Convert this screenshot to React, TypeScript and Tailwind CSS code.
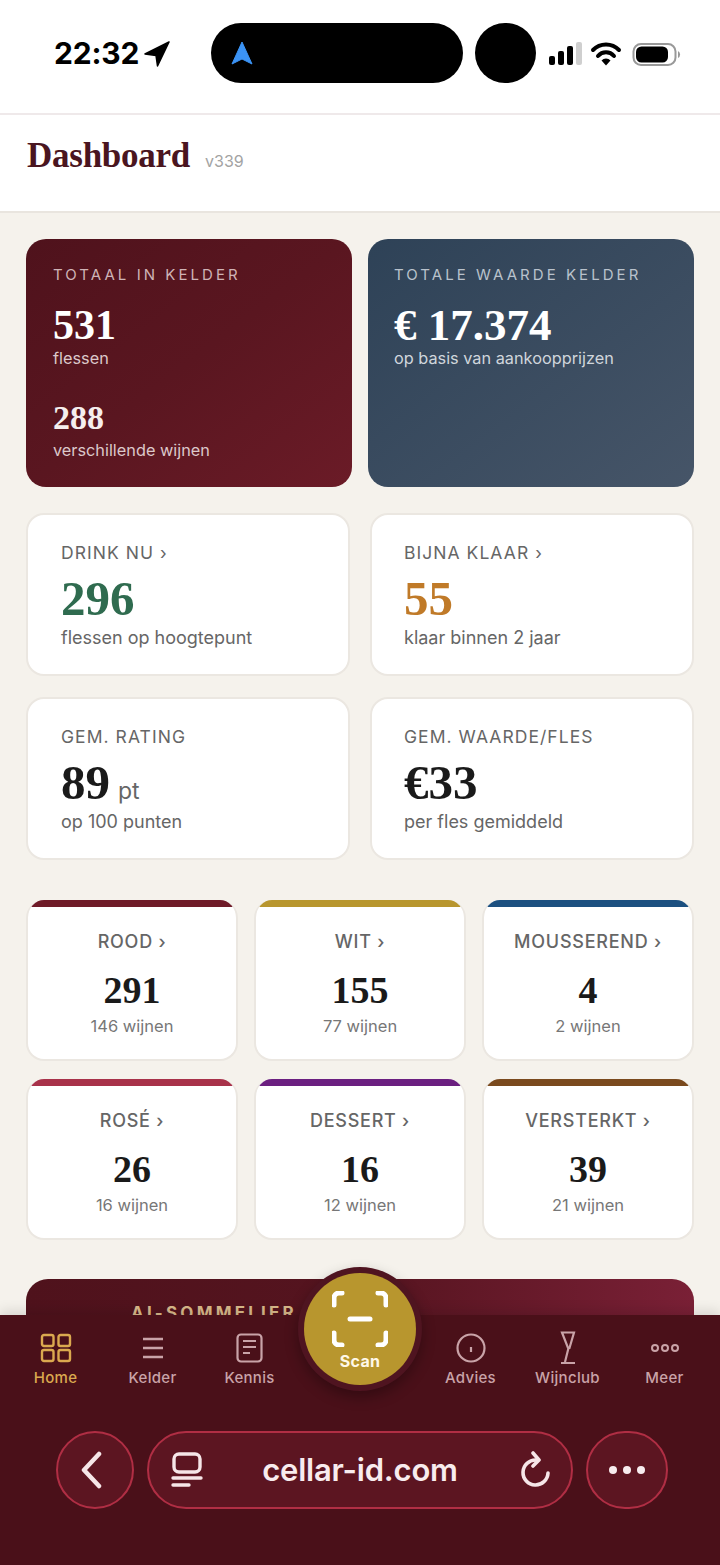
const serif = "font-['Liberation_Serif','Times_New_Roman',serif]";

function StatCard({ label, value, sub, valueClass = "text-[#1a1a1a]", unit, right }: { label: string; value: string; sub: string; valueClass?: string; unit?: string; right?: boolean }) {
  return (
    <div className={`h-[163px] rounded-[18px] border-2 border-[#ebe7e1] bg-white pt-[27px] ${right ? "pl-[32px]" : "pl-[33px]"}`}>
      <div className="text-[17.5px] leading-[22px] tracking-[1.05px] text-[#666]">{label}</div>
      <div className="mt-[10px] flex h-[50px] items-baseline">
        <span className={`${serif} text-[49px] leading-[50px] font-bold ${valueClass}`}>{value}</span>
        {unit && <span className="ml-[8px] text-[23px] text-[#666]">{unit}</span>}
      </div>
      <div className="mt-[3px] text-[18px] leading-[22px] text-[#666]">{sub}</div>
    </div>
  );
}

function TypeCard({ label, value, sub, top }: { label: string; value: string; sub: string; top: string }) {
  return (
    <div className="h-[161px] overflow-hidden rounded-[18px] border-2 border-t-0 border-[#ebe7e1] bg-white text-center">
      <div className={`h-[7px] ${top}`} />
      <div className="mt-[24px] text-[18px] leading-[22px] font-medium tracking-[0.75px] text-[#666]">{label}</div>
      <div className={`${serif} mt-[15px] text-[38px] leading-[44px] font-bold text-[#1a1a1a]`}>{value}</div>
      <div className="mt-[3px] text-[16.5px] leading-[22px] text-[#777]">{sub}</div>
    </div>
  );
}

function NavItem({ label, active, children }: { label: string; active?: boolean; children: React.ReactNode }) {
  return (
    <div className={`flex w-[97px] shrink-0 flex-col items-center ${active ? "text-[#dba94f]" : "text-[#c9a3a8]"}`}>
      <div className="flex h-[36px] w-[36px] items-center justify-center">{children}</div>
      <div className="mt-[2px] text-[15px] leading-[20px] font-medium tracking-[0.3px]">{label}</div>
    </div>
  );
}

export default function App() {
  return (
    <div className="relative h-[1565px] w-[720px] overflow-hidden bg-[#f5f2ec] font-['Inter',sans-serif]">
      {/* status bar */}
      <div className="flex h-[115px] items-start border-b-2 border-[#efe9ea] bg-white">
        <div className="ml-[54px] mt-[37px] text-[30px] leading-[32px] font-bold tracking-[-0.2px] text-black">22:32</div>
        <svg width="26" height="26" viewBox="0 0 26 26" className="ml-[5px] mt-[41px]">
          <path d="M25 1 L1 13 L12 14.5 L13.5 25 Z" fill="#000" stroke="#000" strokeWidth="1.5" strokeLinejoin="round" />
        </svg>
        <div className="ml-[41px] mt-[23px] flex h-[60px] w-[252px] items-center rounded-[30px] bg-black pl-[20px]">
          <svg width="22" height="24" viewBox="0 0 22 24"><path d="M11 1 L21 23 L11 18 L1 23 Z" fill="#3b93f5" stroke="#3b93f5" strokeLinejoin="round" /></svg>
        </div>
        <div className="ml-[12px] mt-[23px] h-[60px] w-[61px] rounded-full bg-black" />
        <svg width="136" height="30" viewBox="0 0 136 30" className="ml-[12px] mt-[38px]">
          <rect x="1" y="18" width="6" height="9" rx="2" fill="#000" />
          <rect x="10" y="13" width="6" height="14" rx="2" fill="#000" />
          <rect x="19" y="8" width="6" height="19" rx="2" fill="#000" />
          <rect x="28" y="4" width="6" height="23" rx="2" fill="#cfcfcf" />
          <path d="M45 12 a18 18 0 0 1 26 0" fill="none" stroke="#000" strokeWidth="4" strokeLinecap="round" />
          <path d="M50 18 a10.5 10.5 0 0 1 16 0" fill="none" stroke="#000" strokeWidth="4" strokeLinecap="round" />
          <path d="M53.5 22.5 L58 27.5 L62.5 22.5 a6 6 0 0 0 -9 0 Z" fill="#000" />
          <rect x="85.5" y="6" width="42" height="21" rx="7.5" fill="none" stroke="#999" strokeWidth="2" />
          <rect x="88" y="8.5" width="32" height="16" rx="5.5" fill="#000" />
          <path d="M130 13 a4 4 0 0 1 0 7 Z" fill="#999" />
        </svg>
      </div>

      {/* header */}
      <div className="flex h-[98px] items-baseline border-b-2 border-[#e9e5df] bg-white pl-[27px] pt-[18px]">
        <span className={`${serif} text-[35px] leading-[46px] font-bold tracking-[-0.25px] text-[#4a1520]`}>Dashboard</span>
        <span className="ml-[15px] text-[16px] text-[#a3a3a3]">v339</span>
      </div>

      {/* content */}
      <div className="px-[26px] pt-[26px]">
        <div className="grid grid-cols-2 gap-[16px]">
          <div className="h-[248px] rounded-[20px] bg-gradient-to-br from-[#4f121c] via-[#5a1620] to-[#6b1b27] pl-[27px] pt-[26px]">
            <div className="text-[15px] leading-[20px] tracking-[3.05px] text-[#cfb3b6]">TOTAAL IN KELDER</div>
            <div className={`${serif} mt-[17px] text-[42px] leading-[46px] font-bold text-white`}>531</div>
            <div className="mt-[-1px] text-[16.3px] leading-[22px] text-[#dcc8ca]">flessen</div>
            <div className={`${serif} mt-[29px] text-[34px] leading-[40px] font-bold text-[#f5eeee]`}>288</div>
            <div className="mt-[1px] text-[16.3px] leading-[22px] text-[#dcc8ca]">verschillende wijnen</div>
          </div>
          <div className="h-[248px] rounded-[20px] bg-gradient-to-br from-[#2e4257] to-[#465568] pl-[26px] pt-[26px]">
            <div className="text-[15px] leading-[20px] tracking-[3.05px] text-[#b9c2cc]">TOTALE WAARDE KELDER</div>
            <div className={`${serif} mt-[17px] text-[45px] leading-[46px] font-bold text-white`}>€ 17.374</div>
            <div className="mt-[-1px] text-[16.3px] leading-[22px] text-[#d0d6dc]">op basis van aankoopprijzen</div>
          </div>
        </div>

        <div className="mt-[26px] grid grid-cols-2 gap-x-[20px] gap-y-[21px]">
          <StatCard label="DRINK NU ›" value="296" sub="flessen op hoogtepunt" valueClass="text-[#2f6b4f]" />
          <StatCard right label="BIJNA KLAAR ›" value="55" sub="klaar binnen 2 jaar" valueClass="text-[#c07a28]" />
          <StatCard label="GEM. RATING" value="89" unit="pt" sub="op 100 punten" />
          <StatCard right label="GEM. WAARDE/FLES" value="€33" sub="per fles gemiddeld" />
        </div>

        <div className="mt-[40px] grid grid-cols-3 gap-x-[16px] gap-y-[18px]">
          <TypeCard label="ROOD ›" value="291" sub="146 wijnen" top="bg-[#6f1b28]" />
          <TypeCard label="WIT ›" value="155" sub="77 wijnen" top="bg-[#b8962e]" />
          <TypeCard label="MOUSSEREND ›" value="4" sub="2 wijnen" top="bg-[#1c5080]" />
          <TypeCard label="ROSÉ ›" value="26" sub="16 wijnen" top="bg-[#a8324a]" />
          <TypeCard label="DESSERT ›" value="16" sub="12 wijnen" top="bg-[#6b1f80]" />
          <TypeCard label="VERSTERKT ›" value="39" sub="21 wijnen" top="bg-[#7a4a1e]" />
        </div>

        <div className="mt-[39px] h-[120px] rounded-t-[22px] bg-gradient-to-r from-[#4f121c] via-[#55141f] to-[#7a2036] pl-[105px] pt-[23px]">
          <div className="text-[17px] leading-[22px] font-bold tracking-[3.2px] text-[#d9b98a]">AI-SOMMELIER</div>
        </div>
      </div>

      {/* bottom nav */}
      <div className="absolute inset-x-0 bottom-0 h-[250px] bg-[#4a1019] shadow-[0_-4px_12px_rgba(0,0,0,0.12)]">
        <div className="flex pl-[7px] pt-[15px]">
          <NavItem label="Home" active>
            <svg width="32" height="30" viewBox="0 0 32 30" fill="none" stroke="currentColor" strokeWidth="2.4">
              <rect x="2" y="2" width="11.5" height="11" rx="2" /><rect x="18.5" y="2" width="11.5" height="11" rx="2" />
              <rect x="2" y="17" width="11.5" height="11" rx="2" /><rect x="18.5" y="17" width="11.5" height="11" rx="2" />
            </svg>
          </NavItem>
          <NavItem label="Kelder">
            <svg width="20" height="22" viewBox="0 0 20 22" fill="none" stroke="currentColor" strokeWidth="2.4">
              <path d="M0 2 H20 M0 11 H20 M0 20 H20" />
            </svg>
          </NavItem>
          <NavItem label="Kennis">
            <svg width="27" height="30" viewBox="0 0 27 30" fill="none" stroke="currentColor" strokeWidth="2.2">
              <rect x="1.5" y="1.5" width="24" height="27" rx="3.5" />
              <path d="M7 8 H20 M7 14 H20 M7 20 H14" />
            </svg>
          </NavItem>
          <div className="w-[124px] shrink-0" />
          <NavItem label="Advies">
            <svg width="30" height="30" viewBox="0 0 30 30" fill="none" stroke="currentColor" strokeWidth="2.2">
              <circle cx="15" cy="15" r="13.5" /><path d="M15 14 V19" />
            </svg>
          </NavItem>
          <NavItem label="Wijnclub">
            <svg width="16" height="34" viewBox="0 0 16 34" fill="none" stroke="currentColor" strokeWidth="2.2">
              <path d="M2 1.5 H14 L9.5 17 H8 Z M8.5 17 L5 31 M1 32 H15" />
            </svg>
          </NavItem>
          <NavItem label="Meer">
            <svg width="28" height="10" viewBox="0 0 28 10" fill="none" stroke="currentColor" strokeWidth="2">
              <circle cx="4" cy="5" r="3" /><circle cx="14" cy="5" r="3" /><circle cx="24" cy="5" r="3" />
            </svg>
          </NavItem>
        </div>

        <div className="absolute left-[56px] top-[116px] flex h-[78px] w-[78px] items-center justify-center rounded-full border-2 border-[#b02e44] bg-[#5c1521] pr-[6px]">
          <svg width="26" height="38" viewBox="0 0 26 38" fill="none" stroke="#f6e6e8" strokeWidth="4.5" strokeLinecap="round" strokeLinejoin="round"><path d="M20 3 L5 19 L20 35" /></svg>
        </div>
        <div className="absolute left-[147px] top-[116px] flex h-[78px] w-[426px] items-center rounded-[39px] border-2 border-[#b02e44] bg-[#5c1521] pl-[22px] pr-[19px]">
          <svg width="32" height="36" viewBox="0 0 32 36" fill="none" stroke="#f6e6e8" strokeWidth="3.4" strokeLinecap="round">
            <rect x="3" y="2" width="26" height="18" rx="5" /><path d="M2 26 H30 M2 33 H18" />
          </svg>
          <span className="flex-1 pr-[3px] text-center text-[31px] leading-[38px] font-semibold tracking-[-0.2px] text-[#f8ecee]">cellar-id.com</span>
          <svg width="32" height="38" viewBox="0 0 32 38" fill="none" stroke="#f6e6e8" strokeWidth="3.6" strokeLinecap="round" strokeLinejoin="round">
            <path d="M16 9 A12.5 12.5 0 1 0 28 22" /><path d="M13 2 L19 9 L13 15" />
          </svg>
        </div>
        <div className="absolute left-[586px] top-[116px] flex h-[78px] w-[82px] items-center justify-center gap-[6px] rounded-full border-2 border-[#b02e44] bg-[#5c1521]">
          <span className="h-[8px] w-[8px] rounded-full bg-[#f8ecee]" /><span className="h-[8px] w-[8px] rounded-full bg-[#f8ecee]" /><span className="h-[8px] w-[8px] rounded-full bg-[#f8ecee]" />
        </div>
      </div>

      {/* scan */}
      <div className="absolute left-[298px] top-[1267px] flex h-[124px] w-[124px] items-center justify-center rounded-full bg-[#4f1420] shadow-[0_6px_14px_rgba(0,0,0,0.3)]">
        <div className="flex h-[112px] w-[112px] flex-col items-center rounded-full bg-[#b8962e] pt-[18px]">
          <svg width="56" height="56" viewBox="0 0 56 56" fill="none" stroke="#fff" strokeWidth="5" strokeLinecap="round" strokeLinejoin="round">
            <path d="M2 14 V7 a5 5 0 0 1 5 -5 H10 M46 2 H49 a5 5 0 0 1 5 5 V14 M2 42 V49 a5 5 0 0 0 5 5 H10 M46 54 H49 a5 5 0 0 0 5 -5 V42" />
            <path d="M18 28 H38" />
          </svg>
          <div className="mt-[4px] text-[16px] leading-[20px] font-bold tracking-[0.3px] text-[#fff8e8]">Scan</div>
        </div>
      </div>
    </div>
  );
}
